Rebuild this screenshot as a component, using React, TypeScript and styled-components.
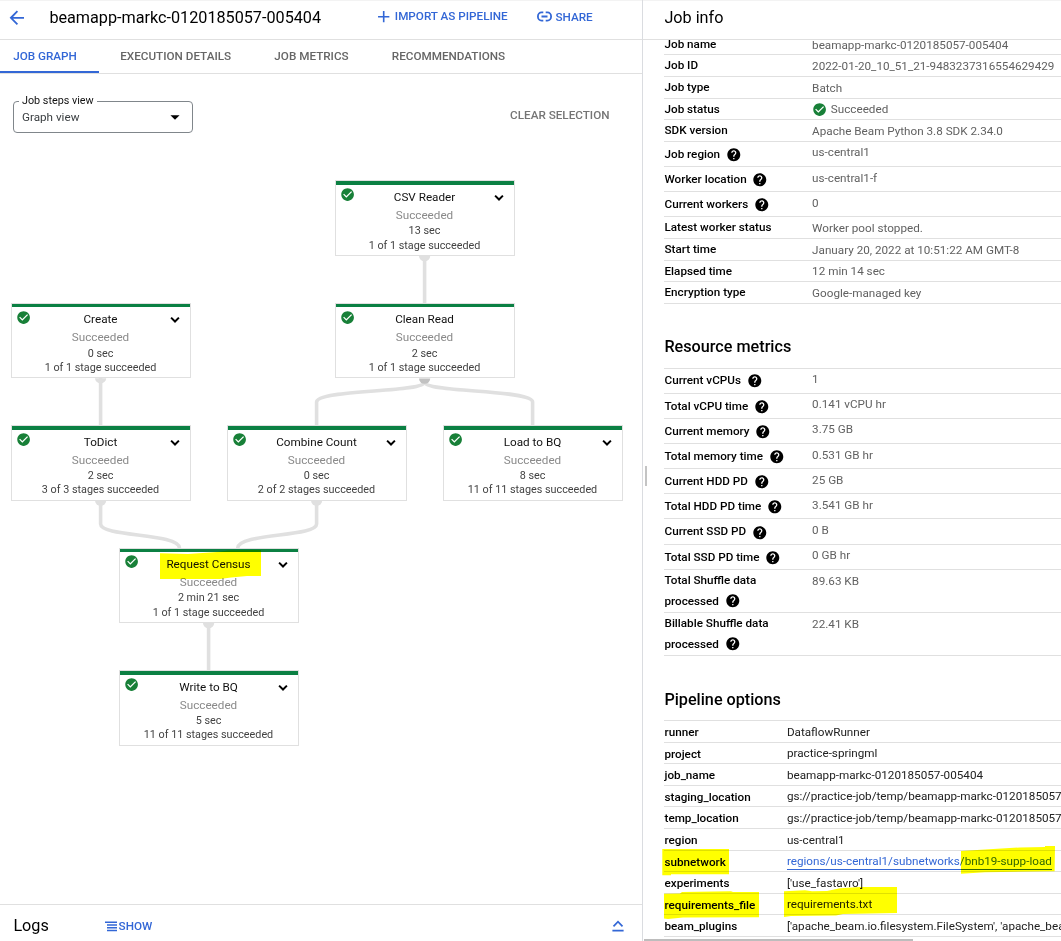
import React from 'react';
import styled, { createGlobalStyle } from 'styled-components';
import { MdArrowBack, MdAdd, MdArrowDropDown, MdCheckCircle, MdHelp } from 'react-icons/md';

const GlobalStyle = createGlobalStyle`
  * { box-sizing: border-box; }
  body { margin: 0; background: #fff; overflow: hidden; }
`;

const BLUE = '#3367d6';
const LINE = '#e0e0e0';

const Page = styled.div`
  position: relative;
  display: flex;
  width: 1061px;
  height: 941px;
  overflow: hidden;
  background: #fff;
  color: #000;
  font: 400 11.7px/18px Roboto, sans-serif;
  box-shadow: inset 0 1px 0 #f3f3f3;
`;

/* Left pane */

const MainPane = styled.main`
  display: flex;
  flex-direction: column;
  width: 643px;
  border-right: 1px solid #dadce0;
`;

const Header = styled.header`
  display: flex;
  align-items: center;
  height: 40px;
  padding-bottom: 4px;
  border-bottom: 1px solid ${LINE};
  flex-shrink: 0;
`;

const BackButton = styled.button`
  display: flex;
  margin-left: 6.4px;
  padding: 0;
  border: 0;
  background: none;
  color: ${BLUE};
  font-size: 21.6px;
`;

const Title = styled.h1`
  width: 324.4px;
  margin: 0 0 0 21.4px;
  font-size: 16.2px;
  font-weight: 400;
  line-height: 22px;
`;

const TextButton = styled.button<{ $gap?: number; $ml?: number; $muted?: boolean }>`
  display: flex;
  align-items: center;
  gap: ${(p) => p.$gap ?? 0}px;
  margin: 0 0 0 ${(p) => p.$ml ?? 0}px;
  padding: 0;
  border: 0;
  background: none;
  color: ${(p) => (p.$muted ? '#757575' : BLUE)};
  font: 500 11.7px/16px Roboto, sans-serif;
  white-space: nowrap;
`;

const HeaderAction = styled(TextButton)`
  margin-bottom: 2px;
`;

const Tabs = styled.nav`
  display: flex;
  height: 34px;
  border-bottom: 1px solid ${LINE};
  flex-shrink: 0;
`;

const Tab = styled.a<{ $active?: boolean }>`
  display: flex;
  align-items: center;
  height: 33px;
  padding: ${(p) => (p.$active ? '0 21.8px 0 13.2px' : '0 21.6px 2px')};
  border-bottom: ${(p) => (p.$active ? `2px solid ${BLUE}` : '0')};
  color: ${(p) => (p.$active ? BLUE : '#666')};
  font-weight: 500;
  white-space: nowrap;
`;

const Workspace = styled.section`
  position: relative;
  flex: 1;
`;

const Controls = styled.div`
  position: relative;
  display: flex;
  justify-content: space-between;
  align-items: flex-start;
  padding: 27px 32.5px 0 13px;
`;

const Select = styled.fieldset`
  display: flex;
  align-items: center;
  justify-content: space-between;
  width: 180px;
  height: 32px;
  margin: 0;
  padding: 0 6px 1px 8px;
  position: relative;
  border: 1px solid #80868b;
  border-radius: 4px;
  color: #3c4043;

  svg { font-size: 22px; color: #000; }
`;

const SelectLabel = styled.span`
  position: absolute;
  top: -10px;
  left: 5px;
  padding: 0 3px;
  background: #fff;
  color: #111;
  font-size: 10.8px;
`;

const ClearWrap = styled.div`
  padding-top: 6.4px;
`;

const Canvas = styled.div`
  position: absolute;
  inset: 0;
`;

const Edges = styled.svg`
  position: absolute;
  inset: 0;
  fill: none;
  stroke: ${LINE};
  stroke-width: 3.6;
`;

const NodeCard = styled.article<{ $x: number; $y: number }>`
  position: absolute;
  left: ${(p) => p.$x}px;
  top: ${(p) => p.$y}px;
  display: flex;
  flex-direction: column;
  width: 180px;
  height: 75.6px;
  border: 1px solid ${LINE};
  background: #fff;
  text-align: center;
  white-space: nowrap;
`;

const NodeBar = styled.div`
  height: 3.6px;
  background: #0b8043;
`;

const NodeText = styled.div`
  padding: 3px 1px 0 0;
`;

const NodeTitle = styled.div`
  color: #111;
  line-height: 18px;
`;

const NodeStatus = styled.div`
  color: #8a8a8a;
  line-height: 18.2px;
`;

const NodeMeta = styled.div`
  color: #424242;
  font-size: 10.8px;
  line-height: 14.4px;
`;

const NodeBadge = styled(MdCheckCircle)`
  position: absolute;
  left: 3.5px;
  top: 5.8px;
  color: #188038;
  font-size: 15.2px;
`;

const NodeChevron = styled.svg`
  position: absolute;
  left: 157px;
  top: 12.6px;
  fill: none;
  stroke: #000;
  stroke-width: 2;
`;

const LogsBar = styled.footer`
  display: flex;
  align-items: center;
  height: 37px;
  padding: 6px 18px 0 13.4px;
  border-top: 1px solid ${LINE};
`;

const LogsTitle = styled.h2`
  width: 91.6px;
  margin: 0;
  font-size: 16.2px;
  font-weight: 400;
`;

const ShowButton = styled(TextButton)`
  flex: 1;
`;

/* Right pane */

const InfoPane = styled.aside`
  position: relative;
  display: flex;
  flex-direction: column;
  width: 418px;
`;

const InfoHeader = styled(Header)`
  padding-left: 21.4px;
`;

const PaneTitle = styled.h2`
  margin: 0;
  font-size: 16.2px;
  font-weight: 400;
  line-height: 22px;
`;

const Scroller = styled.div`
  flex: 1;
  overflow: hidden;
`;

const ScrollContent = styled.div`
  margin-top: -6.2px;
  padding-left: 21px;
`;

const SectionTitle = styled.h3`
  height: 63.8px;
  margin: 0;
  padding: 32.3px 0 0 0.4px;
  font-size: 16.2px;
  font-weight: 500;
  line-height: 22px;
`;

const Table = styled.dl<{ $titled?: boolean }>`
  margin: 0;
  border-top: ${(p) => (p.$titled ? `1px solid ${LINE}` : '0')};
`;

const Row = styled.div<{ $h: number; $first?: boolean }>`
  display: flex;
  height: ${(p) => p.$h}px;
  margin-top: ${(p) => (p.$first ? -0.2 : 0)}px;
  padding-left: 0.5px;
  border-bottom: 1px solid ${LINE};
  white-space: nowrap;
`;

const Label = styled.dt<{ $w: number; $line: number }>`
  width: ${(p) => p.$w}px;
  flex-shrink: 0;
  font-weight: 500;
  line-height: ${(p) => p.$line}px;
`;

const LabelLine = styled.div`
  display: flex;
  align-items: center;
`;

const HelpIcon = styled(MdHelp)`
  margin-left: 5.6px;
  font-size: 15.6px;
`;

const Value = styled.dd<{ $dark?: boolean }>`
  display: flex;
  align-items: center;
  height: 21.4px;
  margin: 0;
  color: ${(p) => (p.$dark ? '#212121' : '#616161')};
`;

const StatusIcon = styled(MdCheckCircle)`
  margin: 1px 3.4px 0 0.2px;
  color: #188038;
  font-size: 15.2px;
`;

const Link = styled.a`
  height: 16px;
  margin-top: 1.4px;
  border-bottom: 1px solid ${BLUE};
  color: ${BLUE};
  line-height: 14.8px;
`;

const SplitHandle = styled.div`
  position: absolute;
  left: 2px;
  top: 466px;
  width: 2px;
  height: 20px;
  background: #c4c4c4;
`;

const ScrollThumb = styled.div`
  position: absolute;
  left: 1px;
  bottom: 0;
  width: 269px;
  height: 2px;
  background: #bdbdbd;
`;

const Marker = styled.svg`
  position: absolute;
  inset: 0;
  fill: #ffff00;
  mix-blend-mode: multiply;
  pointer-events: none;
`;

type Step = { x: number; y: number; name: string; time: string; stages: string; leaf?: boolean };

const steps: Step[] = [
  { x: 335, y: 106.4, name: 'CSV Reader', time: '13 sec', stages: '1 of 1 stage succeeded' },
  { x: 11, y: 228.8, name: 'Create', time: '0 sec', stages: '1 of 1 stage succeeded' },
  { x: 335, y: 228.8, name: 'Clean Read', time: '2 sec', stages: '1 of 1 stage succeeded', leaf: true },
  { x: 11, y: 351.2, name: 'ToDict', time: '2 sec', stages: '3 of 3 stages succeeded' },
  { x: 227, y: 351.2, name: 'Combine Count', time: '0 sec', stages: '2 of 2 stages succeeded' },
  { x: 443, y: 351.2, name: 'Load to BQ', time: '8 sec', stages: '11 of 11 stages succeeded' },
  { x: 119, y: 473.6, name: 'Request Census', time: '2 min 21 sec', stages: '1 of 1 stage succeeded' },
  { x: 119, y: 596, name: 'Write to BQ', time: '5 sec', stages: '11 of 11 stages succeeded' },
];

const edges = [
  'M424.6 182V229',
  'M100.6 304V352',
  'M424.6 308C424.6 319 316.6 315 316.6 328V352',
  'M424.6 308C424.6 319 532.6 315 532.6 328V352',
  'M100.6 426V450C100.6 463 179 459 179.5 474',
  'M316.6 426V450C316.6 463 238.2 459 237.7 474',
  'M208.6 549V597',
];

const ports: [number, number, string?][] = [
  [424.6, 182],
  [100.6, 304.2],
  [424.6, 304.6, '#c2c2c2'],
  [100.6, 426.6],
  [316.6, 426.6],
  [208.6, 549],
];

type Info = { label: string[]; value: string; help?: boolean; status?: boolean };

const jobInfo: Info[] = [
  { label: ['Job name'], value: 'beamapp-markc-0120185057-005404' },
  { label: ['Job ID'], value: '2022-01-20_10_51_21-9483237316554629429' },
  { label: ['Job type'], value: 'Batch' },
  { label: ['Job status'], value: 'Succeeded', status: true },
  { label: ['SDK version'], value: 'Apache Beam Python 3.8 SDK 2.34.0' },
  { label: ['Job region'], value: 'us-central1', help: true },
  { label: ['Worker location'], value: 'us-central1-f', help: true },
  { label: ['Current workers'], value: '0', help: true },
  { label: ['Latest worker status'], value: 'Worker pool stopped.' },
  { label: ['Start time'], value: 'January 20, 2022 at 10:51:22 AM GMT-8' },
  { label: ['Elapsed time'], value: '12 min 14 sec' },
  { label: ['Encryption type'], value: 'Google-managed key' },
];

const metrics: Info[] = [
  { label: ['Current vCPUs'], value: '1', help: true },
  { label: ['Total vCPU time'], value: '0.141 vCPU hr', help: true },
  { label: ['Current memory'], value: '3.75 GB', help: true },
  { label: ['Total memory time'], value: '0.531 GB hr', help: true },
  { label: ['Current HDD PD'], value: '25 GB', help: true },
  { label: ['Total HDD PD time'], value: '3.541 GB hr', help: true },
  { label: ['Current SSD PD'], value: '0 B', help: true },
  { label: ['Total SSD PD time'], value: '0 GB hr', help: true },
  { label: ['Total Shuffle data', 'processed'], value: '89.63 KB', help: true },
  { label: ['Billable Shuffle data', 'processed'], value: '22.41 KB', help: true },
];

const options: [string, string][] = [
  ['runner', 'DataflowRunner'],
  ['project', 'practice-springml'],
  ['job_name', 'beamapp-markc-0120185057-005404'],
  ['staging_location', 'gs://practice-job/temp/beamapp-markc-0120185057-005404'],
  ['temp_location', 'gs://practice-job/temp/beamapp-markc-0120185057-005404'],
  ['region', 'us-central1'],
  ['subnetwork', 'regions/us-central1/subnetworks/bnb19-supp-load'],
  ['experiments', "['use_fastavro']"],
  ['requirements_file', 'requirements.txt'],
  ['beam_plugins', "['apache_beam.io.filesystem.FileSystem', 'apache_beam.io.hadoopfilesystem']"],
];

function InfoRows({ rows, titled }: { rows: Info[]; titled?: boolean }) {
  return (
    <Table $titled={titled}>
      {rows.map((row, i) => {
        const double = row.label.length > 1;
        const height = double ? 43.2 : row.help ? 25.2 : 21.6;
        return (
          <Row key={row.label[0]} $h={height} $first={titled && i === 0}>
            <Label $w={147.6} $line={double ? 20.8 : row.help ? 25.8 : 21.8}>
              {row.label.map((text, n) => (
                <LabelLine key={text}>
                  {text}
                  {row.help && n === row.label.length - 1 && <HelpIcon />}
                </LabelLine>
              ))}
            </Label>
            <Value>
              {row.status && <StatusIcon />}
              {row.value}
            </Value>
          </Row>
        );
      })}
    </Table>
  );
}

function StepNode({ step }: { step: Step }) {
  return (
    <NodeCard $x={step.x} $y={step.y}>
      <NodeBar />
      <NodeText>
        <NodeTitle>{step.name}</NodeTitle>
        <NodeStatus>Succeeded</NodeStatus>
        <NodeMeta>{step.time}</NodeMeta>
        <NodeMeta>{step.stages}</NodeMeta>
      </NodeText>
      <NodeBadge />
      {!step.leaf && (
        <NodeChevron width="12" height="8" viewBox="0 0 12 8">
          <path d="M2.1 1.6L6 5.5L9.9 1.6" />
        </NodeChevron>
      )}
    </NodeCard>
  );
}

export default function App() {
  return (
    <Page>
      <GlobalStyle />
      <MainPane>
        <Header>
          <BackButton><MdArrowBack /></BackButton>
          <Title>beamapp-markc-0120185057-005404</Title>
          <HeaderAction $gap={1.7}><MdAdd size={19.4} />IMPORT AS PIPELINE</HeaderAction>
          <HeaderAction $gap={3.4} $ml={29.4}>
            <svg width="15" height="11" viewBox="0 0 15 11" fill="none" stroke={BLUE} strokeWidth="1.8">
              <path d="M6.3 1.4H4.6a3.7 4.1 0 0 0 0 8.2H6.3M8.7 1.4h1.7a3.7 4.1 0 0 1 0 8.2H8.7M4.5 5.5h6" />
            </svg>
            SHARE
          </HeaderAction>
        </Header>
        <Tabs>
          <Tab $active>JOB GRAPH</Tab>
          <Tab>EXECUTION DETAILS</Tab>
          <Tab>JOB METRICS</Tab>
          <Tab>RECOMMENDATIONS</Tab>
        </Tabs>
        <Workspace>
          <Canvas>
            <Edges width="642" height="830">
              {edges.map((d) => <path key={d} d={d} />)}
              {ports.map(([x, y, color]) => (
                <path key={`${x}-${y}`} stroke="none" fill={color ?? LINE} d={`M${x - 5.6} ${y}a5.6 5.2 0 0 0 11.2 0z`} />
              ))}
            </Edges>
            {steps.map((s) => <StepNode key={s.name} step={s} />)}
          </Canvas>
          <Controls>
            <Select>
              <SelectLabel>Job steps view</SelectLabel>
              Graph view
              <MdArrowDropDown />
            </Select>
            <ClearWrap><TextButton $muted>CLEAR SELECTION</TextButton></ClearWrap>
          </Controls>
        </Workspace>
        <LogsBar>
          <LogsTitle>Logs</LogsTitle>
          <ShowButton $gap={1.6}>
            <svg width="12" height="11" viewBox="0 0 12 11" fill="none" stroke={BLUE} strokeWidth="1.5">
              <path d="M0 1.2H12M2 4H12M2 6.8H12M2 9.6H12" />
            </svg>
            SHOW
          </ShowButton>
          <svg width="12" height="12" viewBox="0 0 12 12" fill="none" stroke={BLUE} strokeWidth="1.7">
            <path d="M1.5 6.4L6 1.7L10.5 6.4M.4 10.7H11.6" />
          </svg>
        </LogsBar>
      </MainPane>
      <InfoPane>
        <InfoHeader><PaneTitle>Job info</PaneTitle></InfoHeader>
        <Scroller>
          <ScrollContent>
            <InfoRows rows={jobInfo} />
            <SectionTitle>Resource metrics</SectionTitle>
            <InfoRows rows={metrics} titled />
            <SectionTitle>Pipeline options</SectionTitle>
            <Table $titled>
              {options.map(([name, value]) => (
                <Row key={name} $h={21.6}>
                  <Label $w={122.4} $line={22}>{name}</Label>
                  <Value $dark>{name === 'subnetwork' ? <Link>{value}</Link> : value}</Value>
                </Row>
              ))}
            </Table>
          </ScrollContent>
        </Scroller>
        <SplitHandle />
        <ScrollThumb />
      </InfoPane>
      <Marker width="1061" height="941">
        <path d="M160 553.3L188 554L217 552L228 550.4L261 550V576L247 576L231 577.5L220 579H160Z" />
        <path d="M662.3 849H729V874.3H671V875.3H662.3Z" />
        <path d="M961 851L985 849.5L1020 847.5L1045 847V846H1055L1054.6 871.3L985 872.3L961 873.7Z" />
        <path d="M664 893.7L680 893.5L682 892L731 891.3L733 892H759V917.3L683 917.6L668 919L664 918.5Z" />
        <path d="M784 891.3L805 890.2L812 891.3L827 891L840 888.3L860 887H897V913L843 914L836 915.5L791 916L784 917Z" />
      </Marker>
    </Page>
  );
}
